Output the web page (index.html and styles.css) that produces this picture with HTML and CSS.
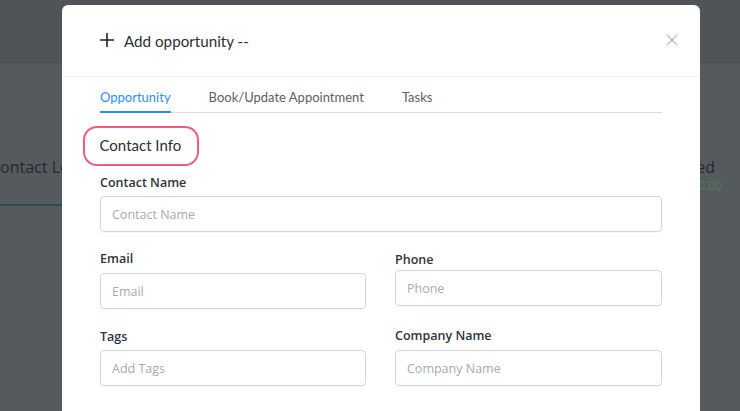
FILE: index.html
```html
<!DOCTYPE html>
<html>
<head>
<meta charset="utf-8">
<link rel="stylesheet" href="styles.css">
</head>
<body>
<div class="page">
  <div class="topbar"></div>
  <div class="stats">
    <div class="stat stat-left"><span class="stat-name">Contact Lead</span></div>
    <div class="stat stat-right"><span class="stat-name closed">Closed</span><span class="stat-val">$0.00</span></div>
  </div>
</div>

<div class="modal">
  <div class="modal-head">
    <svg class="plus" width="16" height="16" viewBox="0 0 16 16"><path d="M8 1v14M1 8h14" stroke="#222" stroke-width="1.6" fill="none"/></svg>
    <span class="title">Add opportunity --</span>
    <svg class="close" width="12" height="12" viewBox="0 0 12 12"><path d="M1 1l10 10M11 1L1 11" stroke="#b5b9bd" stroke-width="1.3" fill="none"/></svg>
  </div>
  <div class="modal-body">
    <div class="tabs">
      <span class="tab active">Opportunity</span>
      <span class="tab">Book/Update Appointment</span>
      <span class="tab">Tasks</span>
    </div>
    <div class="section-title"><span class="highlight">Contact Info</span></div>
    <div class="field f-name">
      <label class="label">Contact Name</label>
      <div class="input">Contact Name</div>
    </div>
    <div class="cols">
      <div class="col">
        <div class="field f-email">
          <label class="label">Email</label>
          <div class="input">Email</div>
        </div>
        <div class="field f-tags">
          <label class="label">Tags</label>
          <div class="input">Add Tags</div>
        </div>
      </div>
      <div class="col">
        <div class="field f-phone">
          <label class="label">Phone</label>
          <div class="input">Phone</div>
        </div>
        <div class="field f-company">
          <label class="label">Company Name</label>
          <div class="input">Company Name</div>
        </div>
      </div>
    </div>
  </div>
</div>
</body>
</html>
```

FILE: styles.css
```css
* { box-sizing: border-box; }
html, body { margin: 0; padding: 0; }
body {
  width: 740px;
  height: 411px;
  overflow: hidden;
  background: #555a5e;
  font-family: "Open Sans", "Noto Sans", sans-serif;
  position: relative;
}
.page { width: 740px; }
.topbar {
  height: 63px;
  background: #505458;
  border-bottom: 1px solid #4a4e52;
}
.stats {
  display: flex;
  justify-content: space-between;
  margin-top: 93px;
}
.stat {
  display: flex;
  flex-direction: column;
  font-family: "Open Sans", sans-serif;
}
.stat-left {
  margin-left: -10px;
  width: 110px;
  padding-bottom: 26px;
  border-bottom: 2px solid #2f4a57;
}
.stat-name {
  font-size: 16px;
  color: #25292d;
  line-height: 22px;
}
.stat-right { margin-right: 18px; align-items: flex-end; }
.closed { margin-right: 7px; }
.stat-val { font-size: 12px; color: #4f7a55; line-height: 16px; }

.modal {
  position: absolute;
  left: 62px;
  top: 5px;
  width: 638px;
  height: 420px;
  background: #fff;
  border-radius: 6px;
}
.modal-head {
  height: 72px;
  display: flex;
  align-items: center;
  padding: 0 22px 0 37px;
  border-bottom: 1px solid #eef0f2;
}
.plus { margin-right: 9px; margin-top: -1px; }
.title {
  font-family: "Lato", sans-serif;
  font-size: 15.2px;
  color: #2b2f33;
  flex: 1;
}
.close { margin-top: -1px; }
.modal-body { padding: 0 38px; }
.tabs {
  display: flex;
  gap: 38px;
  padding-top: 10px;
  border-bottom: 1px solid #dadde0;
}
.tab {
  font-family: "Lato", sans-serif;
  font-size: 13px;
  color: #5c6166;
  line-height: 20px;
  padding-bottom: 4px;
  margin-bottom: -1px;
  border-bottom: 2px solid transparent;
}
.tab.active { color: #2e8ef0; border-bottom-color: #2e8ef0; }
.section-title { margin-top: 13px; margin-left: -17px; height: 40px; }
.highlight {
  display: inline-block;
  height: 40px;
  width: 116px;
  border: 2.5px solid #ef5a86;
  border-radius: 14px;
  padding-left: 14.5px;
  font-family: "Lato", sans-serif;
  font-size: 15px;
  line-height: 34px;
  color: #2b2f33;
}
.field { display: flex; flex-direction: column; }
.label {
  font-size: 12.5px;
  font-weight: 600;
  color: #2d3440;
  line-height: 18px;
}
.input {
  height: 36px;
  border: 1px solid #d4d5dc;
  border-radius: 4px;
  box-shadow: 0 1px 1px rgba(0,0,0,0.04);
  padding-left: 11px;
  display: flex;
  align-items: center;
  font-size: 12.5px;
  color: #a4abb3;
}
.cols {
  display: grid;
  grid-template-columns: 266px 267px;
  column-gap: 29px;
  align-items: start;
}
.col { display: flex; flex-direction: column; }
.f-name .label { margin-top: 8px; margin-bottom: 4px; }
.f-email .label { margin-top: 18px; margin-bottom: 5px; }
.f-phone .label { margin-top: 19px; margin-bottom: 1px; }
.f-tags .label { margin-top: 19px; margin-bottom: 4px; }
.f-company .label { margin-top: 21px; margin-bottom: 5px; }
```
